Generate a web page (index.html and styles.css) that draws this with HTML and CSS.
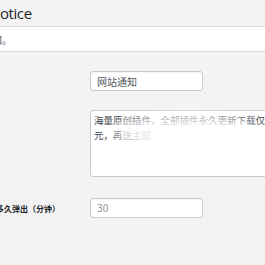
FILE: index.html
```html
<!DOCTYPE html>
<html lang="zh-CN">
<head>
    <meta charset="UTF-8">
    <meta name="viewport" content="width=device-width, initial-scale=1.0">
    <title>Notice</title>
    <link rel="stylesheet" href="styles.css">
</head>
<body>
    <div class="wrap">
        <h1 class="page-title">Notice</h1>

        <div class="section-desc">
            <p>设置网站通知。</p>
        </div>

        <div class="form-table">
            <div class="form-row">
                <label class="field-label" for="noticeTitle">通知标题</label>
                <input class="text-input" id="noticeTitle" type="text" value="网站通知">
            </div>

            <div class="form-row">
                <label class="field-label" for="noticeBody">通知内容</label>
                <div class="textarea-box">
                    <textarea class="text-area" id="noticeBody">海量原创插件，全部插件永久更新下载仅仅99元，再送主题</textarea>
                    <div class="blur-mask"></div>
                </div>
            </div>

            <div class="form-row form-row-last">
                <label class="field-label visible-label" for="noticeDelay">隔多久弹出（分钟）</label>
                <input class="text-input muted" id="noticeDelay" type="text" value="30">
            </div>
        </div>
    </div>
</body>
</html>
```

FILE: styles.css
```css
* {
    margin: 0;
    padding: 0;
    box-sizing: border-box;
}

body {
    font-family: "Open Sans", "Noto Sans CJK SC", sans-serif;
    background: #f3f3f3;
    color: #1d2327;
    overflow: hidden;
}

.wrap {
    width: 265px;
}

.page-title {
    font-size: 15px;
    font-weight: 400;
    letter-spacing: -0.4px;
    line-height: 26px;
    height: 26px;
    margin-left: -11px;
    color: #1d2327;
}

.section-desc {
    background: #fff;
    border-top: 1px solid #dcdcde;
    border-bottom: 1px solid #dcdcde;
    height: 26px;
    display: flex;
    align-items: center;
}

.section-desc p {
    font-family: "Noto Sans CJK SC", sans-serif;
    font-size: 10px;
    white-space: nowrap;
    margin-left: -58px;
    color: #3c434a;
}

.form-table {
    display: flex;
    flex-direction: column;
    gap: 19px;
    padding-top: 19px;
}

.form-row {
    display: flex;
    align-items: flex-start;
}

.form-row-last {
    align-items: center;
    margin-top: 2px;
}

.field-label {
    width: 90px;
    flex-shrink: 0;
    font-family: "Noto Sans CJK SC", sans-serif;
    font-size: 8px;
    font-weight: 700;
    color: #1d2327;
    visibility: hidden;
}

.visible-label {
    visibility: visible;
    white-space: nowrap;
    margin-left: -12px;
    width: 102px;
}

.text-input {
    width: 113px;
    height: 20px;
    border: 1px solid #c9c9c9;
    border-radius: 3px;
    background: #fff;
    box-shadow: inset 0 1px 1px rgba(0, 0, 0, 0.04);
    padding: 0 6px;
    font-family: "Noto Sans CJK SC", sans-serif;
    font-size: 10px;
    color: #50575e;
    outline: none;
}

.text-input.muted {
    font-family: "Open Sans", sans-serif;
    color: #8c8f94;
}

.textarea-box {
    position: relative;
    width: 215px;
    height: 67px;
    flex-shrink: 0;
}

.text-area {
    display: block;
    width: 100%;
    height: 100%;
    border: 1px solid #c9c9c9;
    border-radius: 3px;
    background: #fff;
    padding: 2px 3px;
    font-family: "Noto Sans CJK SC", sans-serif;
    font-size: 9.5px;
    line-height: 15px;
    color: #3c434a;
    resize: none;
    overflow: hidden;
    outline: none;
}

.blur-mask {
    position: absolute;
    left: 24px;
    top: 4px;
    width: 145px;
    height: 40px;
    background: rgba(255, 255, 255, 0.85);
    border-radius: 50%;
    filter: blur(7px);
}
```
